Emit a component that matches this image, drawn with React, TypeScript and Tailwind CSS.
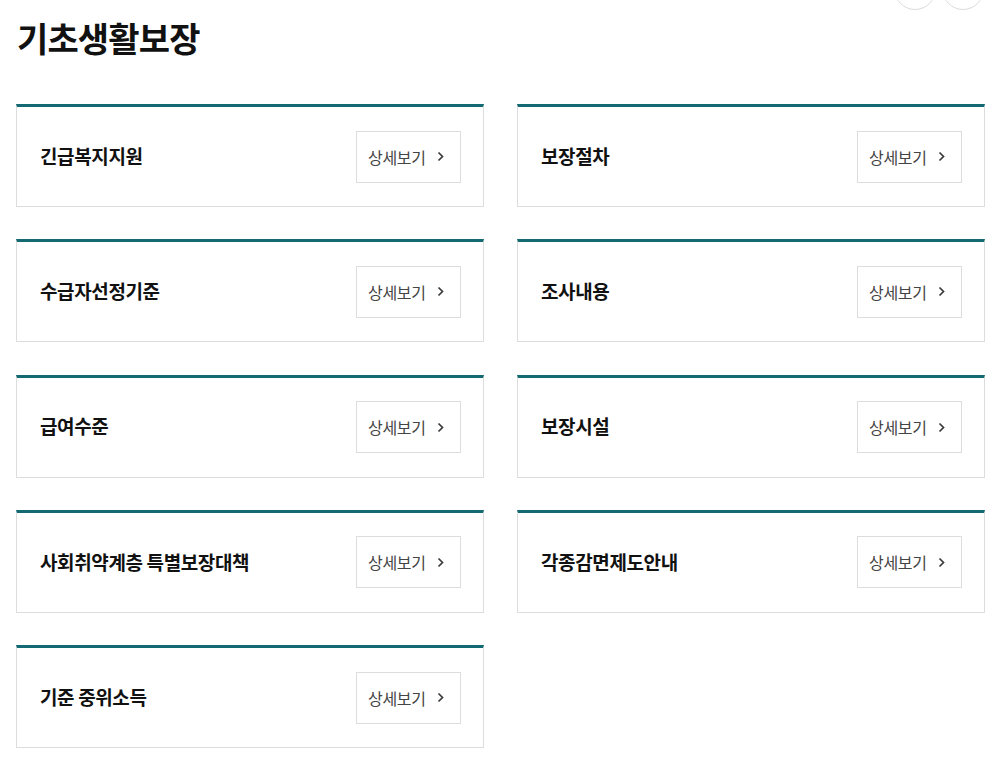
import React from "react";

const items = [
  "긴급복지지원",
  "보장절차",
  "수급자선정기준",
  "조사내용",
  "급여수준",
  "보장시설",
  "사회취약계층 특별보장대책",
  "각종감면제도안내",
  "기준 중위소득",
];

function Chevron() {
  return (
    <svg width="8" height="11" viewBox="0 0 8 11" fill="none" className="ml-[11px]">
      <path d="M1.5 1.5L5.5 5.5L1.5 9.5" stroke="#3a3a3a" strokeWidth="1.7" />
    </svg>
  );
}

export default function App() {
  return (
    <div
      className="relative w-[1000px] h-[761px] overflow-hidden bg-white pl-[16px] pr-[15px]"
      style={{ fontFamily: '"Noto Sans CJK KR", "Noto Sans", sans-serif' }}
    >
      <div className="absolute top-[-32px] left-[894px] flex gap-[6px]">
        <div className="w-[42px] h-[42px] rounded-full border border-[#dcdcdc] bg-white" />
        <div className="w-[42px] h-[42px] rounded-full border border-[#dcdcdc] bg-white" />
      </div>
      <h2 className="pt-[15px] pl-[1px] text-[34px] leading-[46px] font-bold text-[#111] tracking-[-0.025em]">
        기초생활보장
      </h2>
      <div className="mt-[43px] grid grid-cols-2 gap-x-[33px] gap-y-[32.3px]">
        {items.map((t) => (
          <div
            key={t}
            className="h-[103px] border border-[#dddddd] border-t-[3px] border-t-[#146a73] flex items-center justify-between pl-[23px] pr-[22px]"
          >
            <span className="text-[19px] font-bold text-[#111] tracking-[-0.02em] -mt-[1px]">{t}</span>
            <div className="w-[105px] h-[52px] border border-[#dddddd] flex items-center pl-[11px]">
              <span className="text-[16px] text-[#444] tracking-[-0.02em]">상세보기</span>
              <Chevron />
            </div>
          </div>
        ))}
      </div>
    </div>
  );
}
